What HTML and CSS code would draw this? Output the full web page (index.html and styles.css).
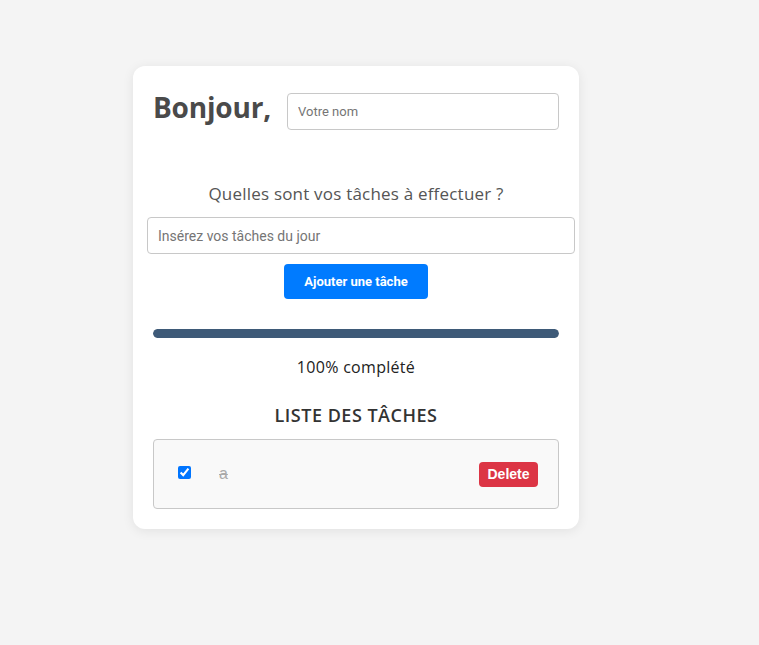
FILE: index.html
```html
<!DOCTYPE html>
<html lang="fr">
<head>
<meta charset="utf-8">
<title>Tâches</title>
<link rel="stylesheet" href="styles.css">
</head>
<body>
<div class="card">
  <div class="header">
    <h1 class="hello">Bonjour,</h1>
    <input class="name-input" type="text" placeholder="Votre nom">
  </div>
  <h2 class="question">Quelles sont vos tâches à effectuer ?</h2>
  <input class="task-input" type="text" placeholder="Insérez vos tâches du jour">
  <div class="add-row"><button class="add-btn">Ajouter une tâche</button></div>
  <div class="progress"><div class="progress-fill" style="width:100%"></div></div>
  <p class="percent">100% complété</p>
  <h3 class="list-title">LISTE DES TÂCHES</h3>
  <ul class="list">
    <li class="item">
      <input class="check" type="checkbox" checked>
      <span class="item-text">a</span>
      <button class="del-btn">Delete</button>
    </li>
  </ul>
</div>
</body>
</html>
```
FILE: styles.css
```css
* { box-sizing: border-box; }
html, body { margin: 0; padding: 0; }
body {
  background: #f4f4f4;
  font-family: "Open Sans", "Liberation Sans", sans-serif;
  width: 759px;
  height: 645px;
  padding-top: 66px;
  padding-left: 133px;
}
.card {
  width: 446px;
  height: 463px;
  background: #fff;
  border-radius: 12px;
  box-shadow: 0 2px 12px rgba(0,0,0,0.08);
  padding: 27px 20px 20px 20px;
}
.header {
  display: flex;
  align-items: flex-start;
  justify-content: space-between;
}
.hello {
  margin: 0;
  font-size: 28px;
  font-weight: 700;
  color: #4a4a4a;
  line-height: 28px;
  letter-spacing: -0.2px;
}
.name-input {
  width: 272px;
  height: 37px;
  border: 1px solid #c8c8c8;
  border-radius: 4px;
  padding: 0 10px;
  font-family: "Roboto", "Liberation Sans", sans-serif;
  font-size: 13px;
  margin-top: 0;
}
.name-input::placeholder, .task-input::placeholder { color: #757575; }
.question {
  margin: 53px 0 0 0;
  text-align: center;
  font-size: 17px;
  font-weight: 400;
  color: #555;
  line-height: 22px;
  letter-spacing: 0.2px;
}
.task-input {
  display: block;
  margin: 12px 0 0 -6px;
  width: 428px;
  height: 37px;
  border: 1px solid #c8c8c8;
  border-radius: 4px;
  padding: 0 10px;
  font-family: "Roboto", "Liberation Sans", sans-serif;
  font-size: 14px;
}
.add-row { display: flex; justify-content: flex-start; padding-left: 131px; margin-top: 10px; }
.add-btn {
  width: 144px;
  height: 35px;
  background: #007bff;
  color: #fff;
  border: none;
  border-radius: 4px;
  font-family: "Roboto", "Liberation Sans", sans-serif;
  font-size: 13px;
  font-weight: 700;
}
.progress {
  margin-top: 30px;
  height: 9px;
  background: #e0e0e0;
  border-radius: 5px;
  overflow: hidden;
}
.progress-fill { height: 100%; background: #3e5a78; border-radius: 5px; }
.percent {
  margin: 18px 0 0 0;
  text-align: center;
  font-size: 16px;
  color: #222;
  line-height: 22px;
  letter-spacing: 0.3px;
}
.list-title {
  margin: 25px 0 0 0;
  text-align: center;
  font-size: 18px;
  font-weight: 600;
  color: #333;
  line-height: 24px;
  letter-spacing: 0.5px;
}
.list { list-style: none; margin: 12px 0 0 0; padding: 0; }
.item {
  height: 70px;
  display: flex;
  align-items: center;
  background: #f9f9f9;
  border: 1px solid #c8c8c8;
  border-radius: 4px;
  padding: 0 20px 0 24px;
}
.check { margin: 0 0 3px 0; width: 13px; height: 13px; }
.item-text {
  margin-left: 28px;
  flex: 1;
  color: #aaa;
  text-decoration: line-through;
  font-family: "Liberation Sans", sans-serif;
  font-size: 16px;
}
.del-btn {
  height: 25px;
  width: 59px;
  background: #dc3545;
  color: #fff;
  border: none;
  border-radius: 4px;
  font-family: "Liberation Sans", sans-serif;
  font-size: 14px;
  font-weight: 700;
  padding: 0;
}
```
